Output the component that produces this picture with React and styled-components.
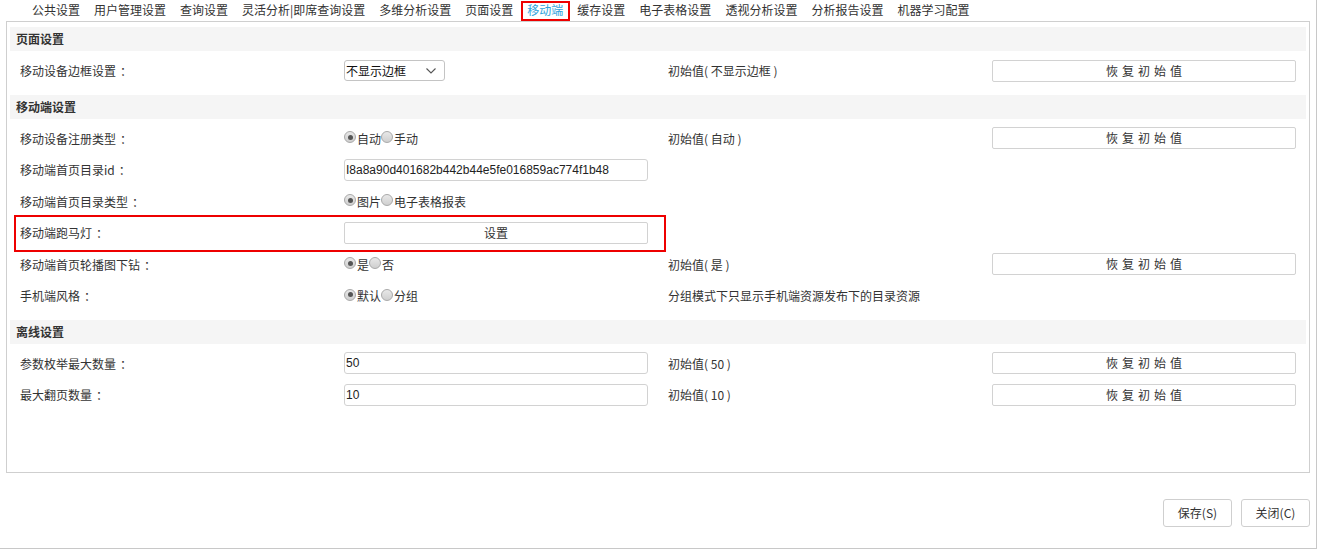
import React from 'react'
import styled, { createGlobalStyle } from 'styled-components'

const GlobalStyle = createGlobalStyle`
	* { box-sizing: border-box; }
	body {
		margin: 0;
		background: #fff;
		color: #333;
		font-family: "Noto Sans CJK SC", "Liberation Sans", sans-serif;
		font-size: 12px;
	}
`

const tabs = ['公共设置', '用户管理设置', '查询设置', '灵活分析|即席查询设置', '多维分析设置', '页面设置', '移动端', '缓存设置', '电子表格设置', '透视分析设置', '分析报告设置', '机器学习配置']

const sections = [
	{
		title: '页面设置',
		rows: [
			{ label: '移动设备边框设置', control: { type: 'select', value: '不显示边框' }, init: '初始值( 不显示边框 )', reset: true },
		]
	},
	{
		title: '移动端设置',
		rows: [
			{ label: '移动设备注册类型', control: { type: 'radio', options: ['自动', '手动'] }, init: '初始值( 自动 )', reset: true },
			{ label: '移动端首页目录id', control: { type: 'input', value: 'I8a8a90d401682b442b44e5fe016859ac774f1b48' } },
			{ label: '移动端首页目录类型', control: { type: 'radio', options: ['图片', '电子表格报表'] } },
			{ label: '移动端跑马灯', control: { type: 'button', value: '设置' }, marked: true },
			{ label: '移动端首页轮播图下钻', control: { type: 'radio', options: ['是', '否'] }, init: '初始值( 是 )', reset: true },
			{ label: '手机端风格', control: { type: 'radio', options: ['默认', '分组'] }, init: '分组模式下只显示手机端资源发布下的目录资源' },
		]
	},
	{
		title: '离线设置',
		rows: [
			{ label: '参数枚举最大数量', control: { type: 'input', value: '50' }, init: '初始值( 50 )', reset: true },
			{ label: '最大翻页数量', control: { type: 'input', value: '10' }, init: '初始值( 10 )', reset: true },
		]
	},
]

const renderControl = (control) => {
	switch (control.type) {
		case 'select':
			return (
				<Select>
					<span>{control.value}</span>
					<svg width="10" height="6" viewBox="0 0 10 6" fill="none" stroke="#555" strokeWidth="1.1">
						<path d="M0.5 0.5 L5 5 L9.5 0.5" />
					</svg>
				</Select>
			)
		case 'radio':
			return (
				<RadioGroup>
					{control.options.map((opt, i) => (
						<RadioItem key={opt}>
							<Radio $checked={i === 0} />
							{opt}
						</RadioItem>
					))}
				</RadioGroup>
			)
		case 'input':
			return <TextInput>{control.value}</TextInput>
		case 'button':
			return <WideButton>{control.value}</WideButton>
		default:
			return null
	}
}

const App = () => {
	return (
		<Window>
			<GlobalStyle />
			<TabBar>
				{tabs.map((tab) => (
					<Tab key={tab} $active={tab === '移动端'}>{tab}</Tab>
				))}
			</TabBar>
			<Panel>
				{sections.map((section) => (
					<Section key={section.title}>
						<SectionHeader>{section.title}</SectionHeader>
						<Rows>
							{section.rows.map((row) => (
								<Row key={row.label}>
									<Cell>{row.label}<Colon>：</Colon></Cell>
									<Cell>{renderControl(row.control)}</Cell>
									<Cell>{row.init}</Cell>
									<Cell>{row.reset && <ResetButton>恢复初始值</ResetButton>}</Cell>
									{row.marked && <Marker />}
								</Row>
							))}
						</Rows>
					</Section>
				))}
			</Panel>
			<Footer>
				<FooterButton>保存(S)</FooterButton>
				<FooterButton>关闭(C)</FooterButton>
			</Footer>
		</Window>
	)
}

const Window = styled.div`
	width: 1317px;
	height: 549px;
	display: flex;
	flex-direction: column;
	border-right: 1px solid #c8c8c8;
	border-bottom: 1px solid #c8c8c8;
`

const TabBar = styled.div`
	display: flex;
	height: 21px;
	padding-left: 25px;
`

const Tab = styled.div`
	position: relative;
	padding: 0 7px;
	line-height: 20px;
	white-space: nowrap;
	color: ${(p) => (p.$active ? '#2ea2dc' : '#333')};

	${(p) => p.$active && `
		&::after {
			content: '';
			position: absolute;
			left: 1px;
			right: 0;
			top: 1px;
			bottom: 0;
			border: 2px solid #ee0000;
		}
	`}
`

const Panel = styled.div`
	height: 452px;
	margin: 0 6px;
	padding: 5px 3px;
	border: 1px solid #cfcfcf;
	display: flex;
	flex-direction: column;
`

const Section = styled.div`
	margin-bottom: 8px;
`

const SectionHeader = styled.div`
	height: 24px;
	line-height: 24px;
	padding-left: 6px;
	background: #f5f5f5;
	font-weight: bold;
	color: #333;
`

const Rows = styled.div`
	padding-top: 4px;
`

const Row = styled.div`
	position: relative;
	display: grid;
	grid-template-columns: repeat(4, 1fr);
	align-items: center;
	height: 31.5px;
`

const Cell = styled.div`
	padding: 0 10px;
	display: flex;
	align-items: center;
	white-space: nowrap;
`

const Colon = styled.span`
	padding-left: 4px;
`

const Marker = styled.div`
	position: absolute;
	left: 4px;
	width: 652px;
	top: -2px;
	bottom: -3px;
	border: 2px solid #ee0000;
	pointer-events: none;
`

const Select = styled.div`
	width: 101px;
	height: 21px;
	padding: 0 8px 0 1px;
	border: 1px solid #c4c4c4;
	border-radius: 3px;
	display: flex;
	align-items: center;
	justify-content: space-between;
	color: #111;
`

const RadioGroup = styled.div`
	display: flex;
	align-items: center;
`

const RadioItem = styled.label`
	display: flex;
	align-items: center;
	gap: 1px;
`

const Radio = styled.span`
	position: relative;
	width: 12px;
	height: 12px;
	border-radius: 50%;
	border: 1px solid #a9a9a9;
	background: linear-gradient(#e8e8e8, #cfcfcf);
	margin-top: -2px;

	${(p) => p.$checked && `
		&::after {
			content: '';
			position: absolute;
			left: 2.5px;
			top: 2.5px;
			width: 5px;
			height: 5px;
			border-radius: 50%;
			background: #555;
		}
	`}
`

const TextInput = styled.div`
	width: 100%;
	height: 22px;
	line-height: 20px;
	padding: 0 1px;
	border: 1px solid #d2d2d2;
	border-radius: 3px;
	font-family: "Liberation Sans", "Noto Sans CJK SC", sans-serif;
	color: #222;
`

const WideButton = styled.div`
	width: 100%;
	height: 22px;
	line-height: 20px;
	text-align: center;
	border: 1px solid #d2d2d2;
	border-radius: 2px;
	background: #fff;
`

const ResetButton = styled(WideButton)`
	letter-spacing: 4px;
	text-indent: 4px;
`

const Footer = styled.div`
	display: flex;
	justify-content: flex-end;
	gap: 9px;
	padding: 26px 6px 0 0;
`

const FooterButton = styled.div`
	width: 69px;
	height: 28px;
	line-height: 26px;
	text-align: center;
	border: 1px solid #cfcfcf;
	border-radius: 3px;
	background: #fff;
`

export default App
